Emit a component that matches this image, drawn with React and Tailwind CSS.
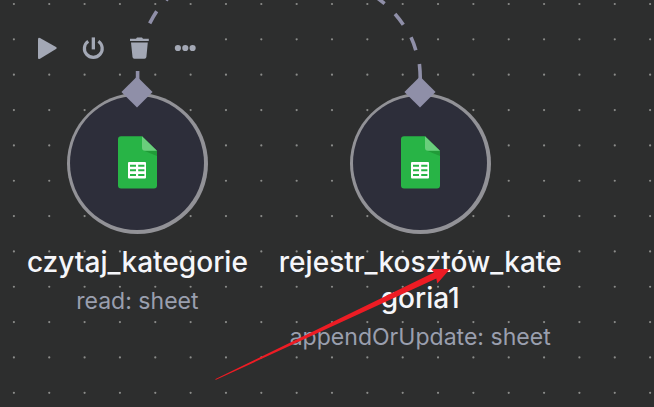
import React from "react";

const GRID = 35.345;
const COLUMNS = Array.from({ length: 19 }, (_, i) => 13.9 + i * GRID);
const ROWS = Array.from({ length: 12 }, (_, i) => 4 + i * GRID);

function Grid() {
  return (
    <svg className="absolute inset-0" width="654" height="407">
      {ROWS.map((y) =>
        COLUMNS.map((x) => (
          <circle key={`${x}-${y}`} cx={x} cy={y} r="1.1" fill="#8b8c8a" />
        ))
      )}
    </svg>
  );
}

function Edges() {
  return (
    <svg className="absolute inset-0" width="654" height="407" fill="none" stroke="#8f8fa8" strokeWidth="3.6">
      <path d="M137.6 80V71M149.7 23.3Q153 17 156.7 11.3M166 .5l2-2.5" />
      <path d="M420.3 80Q420.2 71 419.4 64M415.8 50.3Q414 43.5 411 37.2M403.3 24.8Q399.5 19 395 14M384.6 3.6Q380 0 376-3" />
    </svg>
  );
}

function SheetsIcon() {
  return (
    <svg width="39" height="53" viewBox="0 0 39 53">
      <path d="M3 .3H24L39 15V49.5a3 3 0 0 1-3 3H3a3 3 0 0 1-3-3V3.3a3 3 0 0 1 3-3Z" fill="#28b446" />
      <path d="M26 14.7H39V20Z" fill="#219b38" />
      <path d="M24 .3L39 14.7H27a3 3 0 0 1-3-3Z" fill="#6ace7c" />
      <path
        fill="#fff"
        fillRule="evenodd"
        d="M11 26H27a1 1 0 0 1 1 1V41.5a1 1 0 0 1-1 1H11a1 1 0 0 1-1-1V27a1 1 0 0 1 1-1ZM12 28.8V30.8H18V28.8ZM20.2 28.8V30.8H26.4V28.8ZM12 33.3V35.3H18V33.3ZM20.2 33.3V35.3H26.4V33.3ZM12 37.9V39.9H18V37.9ZM20.2 37.9V39.9H26.4V37.9Z"
      />
    </svg>
  );
}

function Node({ title, subtitle }) {
  return (
    <div className="flex w-[282.8px] shrink-0 flex-col items-center text-center">
      <div className="relative flex size-[141px] items-center justify-center rounded-full bg-[#929297] p-[3.6px]">
        <div className="flex size-full items-center justify-center rounded-full bg-[#2d2e3a] pb-[0.6px]">
          <SheetsIcon />
        </div>
        <div className="absolute -top-[11.5px] left-1/2 -ml-[11px] size-[22px] rotate-45 bg-[#8f8fa8]" />
      </div>
      <div className="pt-[10px] text-[28.05px] leading-[36px] font-medium whitespace-nowrap text-[#f5f6fa]">
        {title.map((line) => (
          <div key={line}>{line}</div>
        ))}
      </div>
      <div className="pt-[6.3px] text-[23.05px] leading-[30px] whitespace-nowrap text-[#9a9fae]">{subtitle}</div>
    </div>
  );
}

function Toolbar() {
  return (
    <svg width="184" height="36" viewBox="24 30 184 36" fill="#a3a8b5">
      <path d="M38 39.2Q38 37 40 38L56 47Q57.7 48 56 49.1L40 58.7Q38 59.7 38 57.8Z" />
      <path d="M88.2 41.2A8.9 8.9 0 1 0 98.4 41.2" fill="none" stroke="#a3a8b5" strokeWidth="3.2" />
      <path d="M91.7 37.4h3.3v12h-3.3Z" />
      <path d="M130 38.8H136L137 37.4H142L143 38.8H148.8V41.1H130ZM131 42.5H147.8L146.4 57Q146.2 58.8 144.4 58.8H134.4Q132.7 58.8 132.5 57Z" />
      <circle cx="177.9" cy="48" r="3.1" />
      <circle cx="185.3" cy="48" r="3.1" />
      <circle cx="192.6" cy="48" r="3.1" />
    </svg>
  );
}

export default function App() {
  return (
    <div className="relative h-[407px] w-[654px] overflow-hidden bg-[#2d2e2e] font-[Inter,sans-serif]">
      <Grid />
      <Edges />
      <div className="relative flex h-full flex-col pt-[30px]">
        <div className="ml-6 flex h-9 w-[184px] bg-[#2d2e2e]">
          <Toolbar />
        </div>
        <div className="-ml-1 flex pt-[26.5px]">
          <Node title={["czytaj_kategorie"]} subtitle="read: sheet" />
          <Node title={["rejestr_kosztów_kate", "goria1"]} subtitle="appendOrUpdate: sheet" />
        </div>
      </div>
      <svg className="absolute inset-0" width="654" height="407">
        <path d="M215 379.3L434 272.5L431 269L450 269L437.3 283.5L436.3 278.5L216 379.8Z" fill="#ed1c24" />
      </svg>
    </div>
  );
}
